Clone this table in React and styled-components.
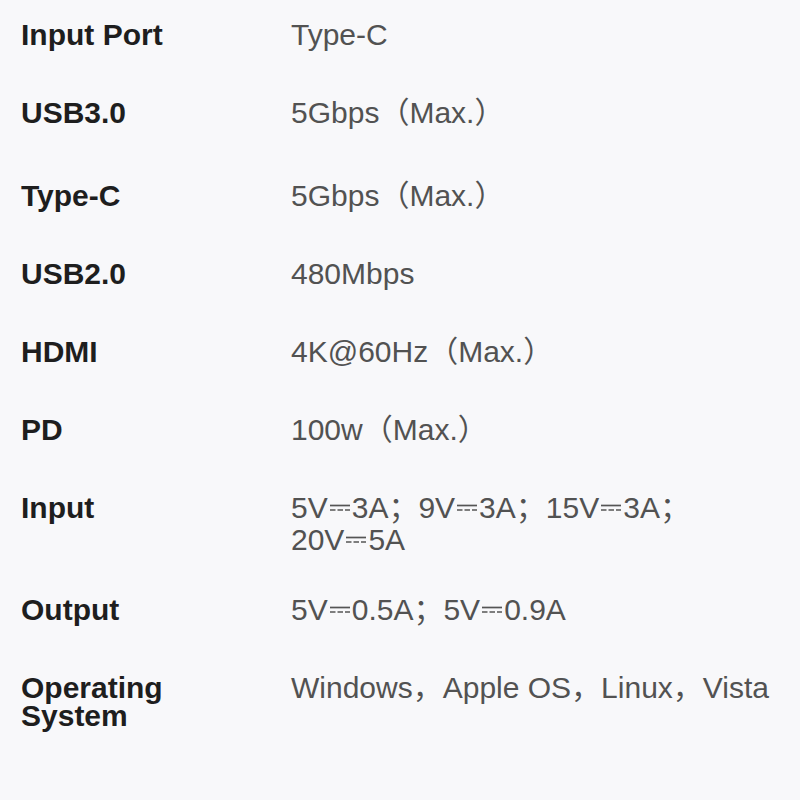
import React from 'react'
import styled, { createGlobalStyle } from 'styled-components'

const specs = [
    { label: 'Input Port', value: ['Type-C'] },
    { label: 'USB3.0', value: ['5Gbps（Max.）'], loose: true },
    { label: 'Type-C', value: ['5Gbps（Max.）'] },
    { label: 'USB2.0', value: ['480Mbps'] },
    { label: 'HDMI', value: ['4K@60Hz（Max.）'] },
    { label: 'PD', value: ['100w（Max.）'] },
    { label: 'Input', value: [['5V', '3A；'], ['9V', '3A；'], ['15V', '3A；'], ['20V', '5A']], tight: true },
    { label: 'Output', value: [['5V', '0.5A；'], ['5V', '0.9A']] },
    { label: 'Operating System', value: ['Windows，Apple OS，Linux，Vista'], wide: true },
]

function DcSign() {
    return (
        <Sign viewBox="0 0 22 12" aria-hidden="true">
            <line x1="1" y1="3.5" x2="21" y2="3.5" stroke="#555" strokeWidth="1.7" />
            <line x1="1" y1="8" x2="21" y2="8" stroke="#555" strokeWidth="1.7" strokeDasharray="5.5 2" />
        </Sign>
    )
}

function App() {
    return (
        <>
            <GlobalStyle />
            <Sheet>
                {specs.map((spec) => (
                    <Row key={spec.label} $tight={spec.tight} $loose={spec.loose}>
                        <Label $narrow={spec.wide}>{spec.label}</Label>
                        <Value>
                            {spec.value.map((part, i) =>
                                Array.isArray(part) ? (
                                    <Segment key={i}>
                                        {part[0]}
                                        <DcSign />
                                        {part[1]}
                                    </Segment>
                                ) : (
                                    <span key={i}>{part}</span>
                                )
                            )}
                        </Value>
                    </Row>
                ))}
            </Sheet>
        </>
    )
}

export default App

const GlobalStyle = createGlobalStyle`
    body {
        margin: 0;
        background: #f8f8fa;
        font-family: "Liberation Sans", "Noto Sans CJK SC", sans-serif;
    }
`

const Sheet = styled.div`
    width: 800px;
    height: 800px;
    box-sizing: border-box;
    padding: 19px 0 0 21px;
    display: flex;
    flex-direction: column;
`

const Row = styled.div`
    display: grid;
    grid-template-columns: 270px 1fr;
    align-items: start;
    margin-bottom: ${(p) => (p.$tight ? '38px' : p.$loose ? '51px' : '46px')};
`

const Label = styled.div`
    font-size: 30px;
    font-weight: bold;
    color: #1e1e1e;
    line-height: ${(p) => (p.$narrow ? '28px' : '32px')};
    padding-top: ${(p) => (p.$narrow ? '2px' : '0')};
    max-width: 160px;
`

const Value = styled.div`
    font-size: 30px;
    color: #525252;
    line-height: 32px;
    padding-right: 20px;
`

const Segment = styled.span`
    white-space: nowrap;
    display: inline-block;
`

const Sign = styled.svg`
    width: 22px;
    height: 12px;
    margin: 0 1px;
    vertical-align: 4px;
`
